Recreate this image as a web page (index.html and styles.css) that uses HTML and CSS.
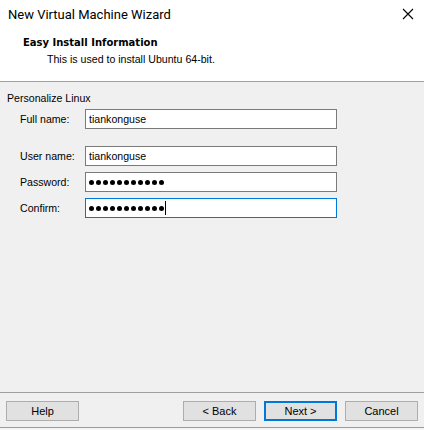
FILE: index.html
```html
<!DOCTYPE html>
<html>
<head>
<meta charset="utf-8">
<link rel="stylesheet" href="styles.css">
</head>
<body>
<div class="window">
  <div class="titlebar">
    <span class="title">New Virtual Machine Wizard</span>
    <svg class="close" width="12" height="12" viewBox="0 0 12 12"><path d="M1 1 L11 11 M11 1 L1 11" stroke="#000" stroke-width="1.1" fill="none"/></svg>
  </div>
  <div class="header">
    <div class="h-title">Easy Install Information</div>
    <div class="h-sub">This is used to install Ubuntu 64-bit.</div>
  </div>
  <div class="content">
    <div class="legend">Personalize Linux</div>
    <div class="row first">
      <span class="label">Full name:</span>
      <div class="field">tiankonguse</div>
    </div>
    <div class="row gap-big">
      <span class="label">User name:</span>
      <div class="field">tiankonguse</div>
    </div>
    <div class="row">
      <span class="label">Password:</span>
      <div class="field dots"><i></i><i></i><i></i><i></i><i></i><i></i><i></i><i></i><i></i><i></i><i></i></div>
    </div>
    <div class="row">
      <span class="label">Confirm:</span>
      <div class="field dots focus"><i></i><i></i><i></i><i></i><i></i><i></i><i></i><i></i><i></i><i></i><i></i><b class="caret"></b></div>
    </div>
  </div>
  <div class="footer">
    <button class="btn">Help</button>
    <button class="btn push">&lt; Back</button>
    <button class="btn default">Next &gt;</button>
    <button class="btn">Cancel</button>
  </div>
  <div class="edge"></div>
</div>
</body>
</html>
```
FILE: styles.css
```css
* { box-sizing: border-box; }
html, body { margin: 0; padding: 0; background: #f0f0f0; }
.window {
  width: 424px;
  height: 430px;
  display: flex;
  flex-direction: column;
  background: #f0f0f0;
  font-family: "Liberation Sans", Arial, sans-serif;
  font-size: 10.6px;
  color: #000;
}
.titlebar {
  height: 28px;
  flex: none;
  background: #fff;
  display: flex;
  align-items: center;
  justify-content: space-between;
  padding: 0 8px 0 8px;
}
.title {
  font-family: Roboto, "Noto Sans", sans-serif;
  font-size: 13px;
  color: #000;
}
.close { margin-right: 2px; }
.header {
  height: 54px;
  flex: none;
  background: #fff;
  border-bottom: 1px solid #a0a0a0;
  padding: 8px 0 0 23px;
}
.h-title {
  font-family: "DejaVu Sans", Verdana, sans-serif;
  font-weight: bold;
  font-size: 10px;
  line-height: 14px;
}
.h-sub { line-height: 14px; margin-top: 2px; padding-left: 24px; }
.content {
  flex: 1;
  padding: 9px 0 0 7px;
}
.legend { line-height: 14px; }
.row {
  display: flex;
  align-items: center;
  height: 20px;
  margin-top: 6px;
  padding-left: 13px;
}
.row.first { margin-top: 4px; }
.row.gap-big { margin-top: 17px; }
.label { width: 65px; flex: none; }
.field {
  width: 252px;
  height: 20px;
  background: #fff;
  border: 1px solid #7a7a7a;
  display: flex;
  align-items: center;
  padding-left: 3px;
}
.field.focus { border-color: #0078d7; }
.dots i {
  display: inline-block;
  width: 5px;
  height: 5px;
  border-radius: 50%;
  background: #000;
  margin-right: 2px;
  flex: none;
}
.caret {
  display: inline-block;
  width: 1px;
  height: 14px;
  background: #000;
  margin-left: -1px;
}
.footer {
  height: 35px;
  flex: none;
  border-top: 1px solid #a0a0a0;
  display: flex;
  gap: 8px;
  padding: 8px 6px 0 6px;
}
.btn {
  width: 73px;
  height: 20px;
  background: #e1e1e1;
  border: 1px solid #adadad;
  font-family: "Liberation Sans", Arial, sans-serif;
  font-size: 11px;
  color: #000;
  padding: 0;
  margin: 0;
}
.btn.push { margin-left: auto; }
.btn.default { border: 2px solid #0078d7; }
.edge {
  height: 3px;
  flex: none;
  border-top: 1px solid #9a9a9a;
  background: #f5f5f5;
}
```
